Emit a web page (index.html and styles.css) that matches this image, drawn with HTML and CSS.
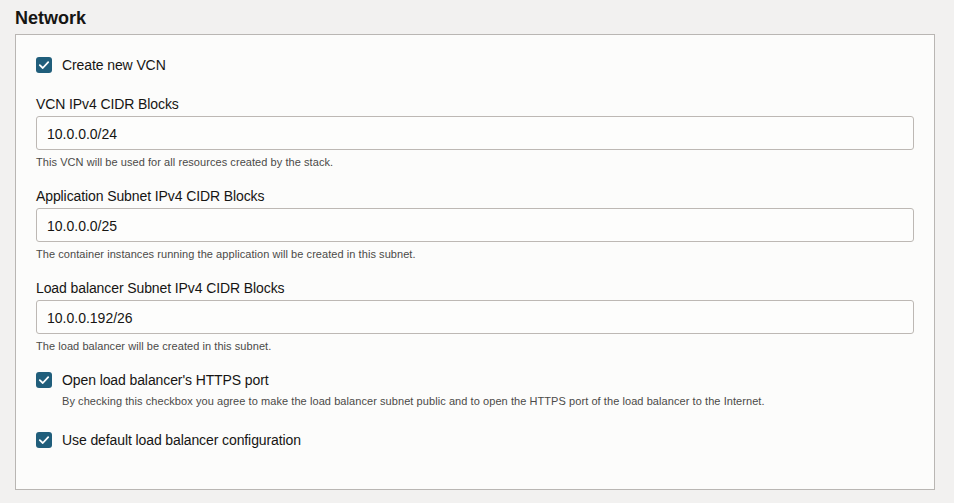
FILE: index.html
```html
<!DOCTYPE html>
<html>
<head>
<meta charset="utf-8">
<link rel="stylesheet" href="styles.css">
</head>
<body>
<h2 class="title">Network</h2>
<div class="panel">
  <div class="check-row first">
    <span class="box"><svg viewBox="0 0 16 16" width="16" height="16"><polyline points="3.8,8.2 6.8,11 12.2,5.2" fill="none" stroke="#fff" stroke-width="1.8" stroke-linecap="round" stroke-linejoin="round"/></svg></span>
    <span class="check-label">Create new VCN</span>
  </div>

  <div class="field">
    <div class="label">VCN IPv4 CIDR Blocks</div>
    <div class="input">10.0.0.0/24</div>
    <div class="help">This VCN will be used for all resources created by the stack.</div>
  </div>

  <div class="field">
    <div class="label">Application Subnet IPv4 CIDR Blocks</div>
    <div class="input">10.0.0.0/25</div>
    <div class="help">The container instances running the application will be created in this subnet.</div>
  </div>

  <div class="field">
    <div class="label">Load balancer Subnet IPv4 CIDR Blocks</div>
    <div class="input">10.0.0.192/26</div>
    <div class="help">The load balancer will be created in this subnet.</div>
  </div>

  <div class="check-row second">
    <span class="box"><svg viewBox="0 0 16 16" width="16" height="16"><polyline points="3.8,8.2 6.8,11 12.2,5.2" fill="none" stroke="#fff" stroke-width="1.8" stroke-linecap="round" stroke-linejoin="round"/></svg></span>
    <span class="check-label">Open load balancer's HTTPS port</span>
  </div>
  <div class="check-desc">By checking this checkbox you agree to make the load balancer subnet public and to open the HTTPS port of the load balancer to the Internet.</div>

  <div class="check-row third">
    <span class="box"><svg viewBox="0 0 16 16" width="16" height="16"><polyline points="3.8,8.2 6.8,11 12.2,5.2" fill="none" stroke="#fff" stroke-width="1.8" stroke-linecap="round" stroke-linejoin="round"/></svg></span>
    <span class="check-label">Use default load balancer configuration</span>
  </div>
</div>
</body>
</html>
```

FILE: styles.css
```css
html, body {
  margin: 0;
  padding: 0;
}
body {
  background: #f2f1f0;
  font-family: "Liberation Sans", Arial, sans-serif;
  color: #161513;
  width: 954px;
  height: 503px;
  overflow: hidden;
}
.title {
  margin: 0;
  padding: 7px 0 0 15px;
  font-size: 18px;
  line-height: 22px;
  font-weight: bold;
  color: #161513;
}
.panel {
  box-sizing: border-box;
  margin: 5px 0 0 15px;
  width: 920px;
  height: 456px;
  border: 1px solid #b9b6b3;
  background: #fcfcfb;
  padding: 21px 20px 0 20px;
}
.check-row {
  display: flex;
  align-items: center;
  gap: 10px;
  height: 18px;
}
.check-row.second {
  margin-top: 18px;
}
.check-row.third {
  margin-top: 23px;
}
.box {
  width: 16px;
  height: 16px;
  border-radius: 3px;
  background: #205e7b;
  display: flex;
}
.check-label {
  font-size: 14px;
  line-height: 18px;
  letter-spacing: -0.1px;
  color: #161513;
}
.check-desc {
  margin: 5px 0 0 26px;
  font-size: 11px;
  line-height: 14px;
  letter-spacing: 0.07px;
  color: #4b4a48;
}
.field {
  margin-top: 21px;
}
.field + .field {
  margin-top: 18px;
}
.label {
  font-size: 14px;
  line-height: 18px;
  letter-spacing: -0.1px;
  color: #161513;
  margin-bottom: 3px;
}
.input {
  box-sizing: border-box;
  height: 34px;
  border: 1px solid #bdb8b4;
  border-radius: 3px;
  background: #fdfdfc;
  padding: 2px 10px 0 10px;
  font-size: 14px;
  line-height: 30px;
  color: #161513;
}
.help {
  margin-top: 5px;
  font-size: 11px;
  line-height: 14px;
  letter-spacing: 0.06px;
  color: #4b4a48;
}
```
